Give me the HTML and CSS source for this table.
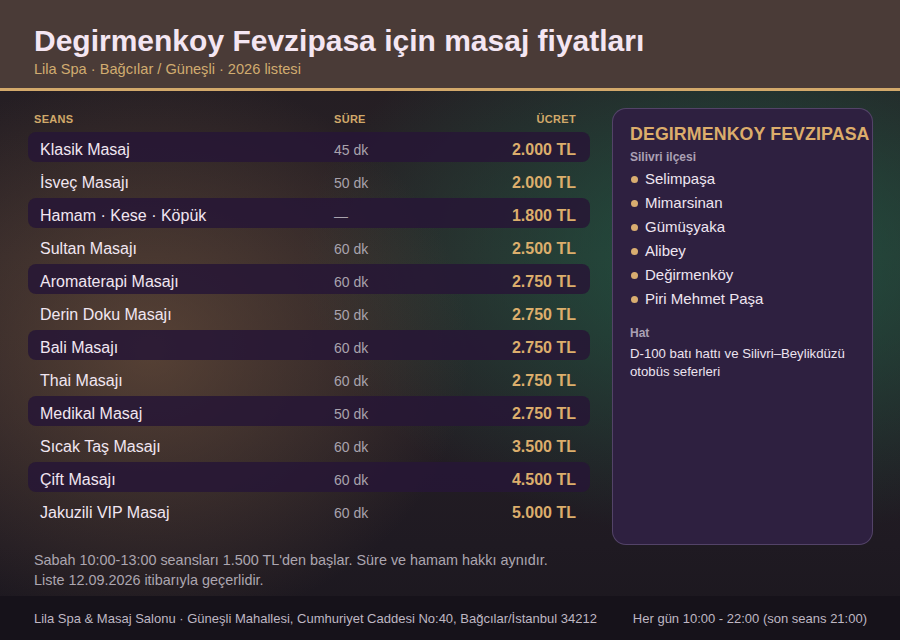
FILE: index.html
```html
<!DOCTYPE html>
<html lang="tr">
<head>
<meta charset="utf-8">
<link rel="stylesheet" href="styles.css">
</head>
<body>
<div class="page">
  <header class="top">
    <h1 class="title">Degirmenkoy Fevzipasa için masaj fiyatları</h1>
    <div class="subtitle">Lila Spa · Bağcılar / Güneşli · 2026 listesi</div>
  </header>
  <main class="main">
    <section class="left">
      <div class="table">
        <div class="thead">
          <span>SEANS</span><span>SÜRE</span><span class="r">ÜCRET</span>
        </div>
        <div class="row alt"><span class="name">Klasik Masaj</span><span class="dur">45 dk</span><span class="price">2.000 TL</span></div>
        <div class="row"><span class="name">İsveç Masajı</span><span class="dur">50 dk</span><span class="price">2.000 TL</span></div>
        <div class="row alt"><span class="name">Hamam · Kese · Köpük</span><span class="dur">—</span><span class="price">1.800 TL</span></div>
        <div class="row"><span class="name">Sultan Masajı</span><span class="dur">60 dk</span><span class="price">2.500 TL</span></div>
        <div class="row alt"><span class="name">Aromaterapi Masajı</span><span class="dur">60 dk</span><span class="price">2.750 TL</span></div>
        <div class="row"><span class="name">Derin Doku Masajı</span><span class="dur">50 dk</span><span class="price">2.750 TL</span></div>
        <div class="row alt"><span class="name">Bali Masajı</span><span class="dur">60 dk</span><span class="price">2.750 TL</span></div>
        <div class="row"><span class="name">Thai Masajı</span><span class="dur">60 dk</span><span class="price">2.750 TL</span></div>
        <div class="row alt"><span class="name">Medikal Masaj</span><span class="dur">50 dk</span><span class="price">2.750 TL</span></div>
        <div class="row"><span class="name">Sıcak Taş Masajı</span><span class="dur">60 dk</span><span class="price">3.500 TL</span></div>
        <div class="row alt"><span class="name">Çift Masajı</span><span class="dur">60 dk</span><span class="price">4.500 TL</span></div>
        <div class="row"><span class="name">Jakuzili VIP Masaj</span><span class="dur">60 dk</span><span class="price">5.000 TL</span></div>
      </div>
      <div class="notes">
        <p>Sabah 10:00-13:00 seansları 1.500 TL'den başlar. Süre ve hamam hakkı aynıdır.</p>
        <p>Liste 12.09.2026 itibarıyla geçerlidir.</p>
      </div>
    </section>
    <aside class="card">
      <h2 class="card-title">DEGIRMENKOY FEVZIPASA</h2>
      <div class="label">Silivri ilçesi</div>
      <ul class="places">
        <li>Selimpaşa</li>
        <li>Mimarsinan</li>
        <li>Gümüşyaka</li>
        <li>Alibey</li>
        <li>Değirmenköy</li>
        <li>Piri Mehmet Paşa</li>
      </ul>
      <div class="label hat">Hat</div>
      <p class="line">D-100 batı hattı ve Silivri–Beylikdüzü otobüs seferleri</p>
    </aside>
  </main>
  <footer class="foot">
    <span>Lila Spa &amp; Masaj Salonu · Güneşli Mahallesi, Cumhuriyet Caddesi No:40, Bağcılar/İstanbul 34212</span>
    <span>Her gün 10:00 - 22:00 (son seans 21:00)</span>
  </footer>
</div>
</body>
</html>
```

FILE: styles.css
```css
* { box-sizing: border-box; }
html, body { margin: 0; padding: 0; }
body {
  width: 900px;
  height: 640px;
  overflow: hidden;
  font-family: "Liberation Sans", Arial, sans-serif;
  background: #1b171d;
}
.page {
  width: 900px;
  height: 640px;
  display: flex;
  flex-direction: column;
  background:
    radial-gradient(ellipse 320px 280px at 150px 350px, rgba(125, 92, 66, 0.55), rgba(125, 92, 66, 0) 100%),
    radial-gradient(ellipse 440px 280px at 740px 260px, rgba(30, 100, 75, 0.75), rgba(30, 100, 75, 0) 100%),
    linear-gradient(180deg, #221c22 0%, #2a2226 40%, #1f1a22 85%, #1b171e 100%);
}
.top {
  height: 91px;
  background: #4a3b37;
  border-bottom: 3px solid #d3a96b;
  padding: 23px 34px 0;
}
.title {
  margin: 0;
  font-size: 30px;
  font-weight: bold;
  line-height: 36px;
  color: #f4e6f2;
}
.subtitle {
  margin-top: 1px;
  font-size: 14.6px;
  line-height: 18px;
  color: #d1ac70;
}
.main {
  flex: 1;
  display: flex;
  padding: 17px 27px 0 28px;
  gap: 22px;
}
.left {
  width: 562px;
  display: flex;
  flex-direction: column;
}
.table {
  display: flex;
  flex-direction: column;
  gap: 3px;
}
.thead {
  display: grid;
  grid-template-columns: 300px 1fr auto;
  padding: 0 14px 0 6px;
  height: 21px;
  align-items: center;
  font-size: 11px;
  font-weight: bold;
  letter-spacing: 0.3px;
  color: #d1a96a;
}
.thead .r { text-align: right; }
.row {
  display: grid;
  grid-template-columns: 294px 1fr auto;
  align-items: center;
  height: 30px;
  padding: 5px 14px 0 12px;
  border-radius: 8px;
}
.row.alt { background: rgba(38, 22, 54, 0.86); }
.name { font-size: 16px; color: #f1e6f1; }
.dur { font-size: 14px; color: #a9a3ad; }
.price { font-size: 16px; font-weight: bold; color: #dcae6c; text-align: right; }
.notes {
  margin-top: 25px;
  font-size: 14.4px;
  line-height: 20px;
  color: #aca6b0;
}
.notes p { margin: 0; padding-left: 6px; }
.card {
  width: 261px;
  height: 437px;
  background: #2e2040;
  border: 1px solid rgba(170, 150, 200, 0.3);
  border-radius: 14px;
  padding: 15px 0 0 17px;
  overflow: visible;
  white-space: nowrap;
}
.card-title {
  margin: 0;
  font-size: 17.8px;
  font-weight: bold;
  line-height: 21px;
  color: #dcad6b;
  letter-spacing: 0.1px;
}
.label {
  margin-top: 4px;
  font-size: 12px;
  font-weight: bold;
  line-height: 16px;
  color: #aba0b4;
}
.places {
  list-style: none;
  margin: 2px 0 0;
  padding: 0;
}
.places li {
  display: flex;
  align-items: center;
  gap: 7px;
  font-size: 15px;
  line-height: 24px;
  color: #efe6f1;
}
.places li::before {
  content: "";
  width: 7px;
  height: 7px;
  border-radius: 50%;
  background: #d9ad70;
  margin-left: 1px;
}
.label.hat { margin-top: 14px; }
.line {
  margin: 4px 0 0;
  white-space: normal;
  width: 232px;
  font-size: 13.2px;
  line-height: 18px;
  color: #ece3ef;
}
.foot {
  height: 44px;
  background: #16121a;
  display: flex;
  align-items: center;
  justify-content: space-between;
  padding: 0 33px 0 34px;
  font-size: 13px;
  color: #bfb7c3;
}
```
